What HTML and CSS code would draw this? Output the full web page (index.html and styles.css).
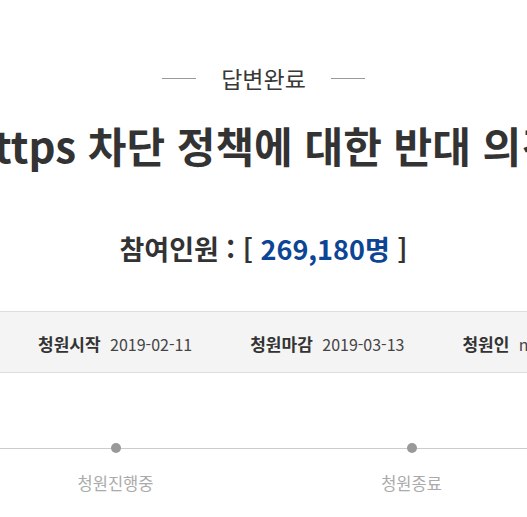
FILE: index.html
```html
<!DOCTYPE html>
<html lang="ko">
<head>
  <meta charset="UTF-8" />
  <meta name="viewport" content="width=device-width, initial-scale=1" />
  <title>https 차단 정책에 대한 반대 의견</title>
  <link rel="stylesheet" href="styles.css">
</head>
<body>

  <div id="petition">
    <div class="status">
      <span class="status-line"></span>
      <span class="status-text">답변완료</span>
      <span class="status-line"></span>
    </div>

    <div class="title-wrap">
      <h1 class="title">https 차단 정책에 대한 반대 의견</h1>
    </div>

    <h2 class="count">참여인원 : [ <span class="count-num">269,180명</span> ]</h2>

    <ul class="meta">
      <li><strong>청원시작</strong> 2019-02-11</li>
      <li><strong>청원마감</strong> 2019-03-13</li>
      <li><strong>청원인</strong> naver - ***</li>
    </ul>

    <ol class="steps">
      <li class="step">
        <div class="track"><span class="dot"></span></div>
        <p class="step-name">청원시작</p>
      </li>
      <li class="step">
        <div class="track"><span class="dot"></span></div>
        <p class="step-name">청원진행중</p>
      </li>
      <li class="step">
        <div class="track"><span class="dot"></span></div>
        <p class="step-name">청원종료</p>
      </li>
      <li class="step">
        <div class="track"><span class="dot"></span></div>
        <p class="step-name">답변완료</p>
      </li>
    </ol>
  </div>

</body>
</html>
```

FILE: styles.css
```css
html, body {
  margin: 0;
  padding: 0;
  background: #fff;
  color: #333;
  font-family: "Noto Sans CJK KR", "Noto Sans", sans-serif;
}

#petition {
  overflow: hidden;
  padding-top: 62px;
}

.status {
  display: flex;
  justify-content: center;
  align-items: center;
  gap: 25px;
  height: 32px;
}

.status-line {
  width: 34px;
  height: 1px;
  background-color: #999;
}

.status-text {
  font-size: 23px;
  line-height: 32px;
  color: #383838;
}

.title-wrap {
  display: flex;
  justify-content: center;
  margin-top: 25px;
}

.title {
  flex: none;
  margin: 0;
  font-size: 42px;
  line-height: 52px;
  font-weight: 700;
  white-space: nowrap;
  color: #333;
}

.count {
  margin: 58px 0 0;
  text-align: center;
  font-size: 27px;
  line-height: 40px;
  font-weight: 700;
  color: #333;
}

.count-num {
  color: #0d4596;
}

.meta {
  display: flex;
  gap: 58px;
  margin: 42px 0 0;
  padding: 20px 0 16px 38px;
  list-style: none;
  background-color: #f4f4f4;
  border-top: 1px solid #ddd;
  border-bottom: 1px solid #ddd;
  white-space: nowrap;
  font-size: 16px;
  line-height: 24px;
  color: #444;
}

.meta strong {
  margin-right: 5px;
  font-size: 17px;
  color: #333;
}

.steps {
  display: flex;
  justify-content: center;
  margin: 70px 0 0;
  padding: 0;
  list-style: none;
}

.step {
  flex: none;
  width: 296px;
  text-align: center;
}

.track {
  display: flex;
  justify-content: center;
  align-items: center;
  height: 10px;
  background: linear-gradient(#ccc, #ccc) center / 100% 1px no-repeat;
}

.dot {
  width: 10px;
  height: 10px;
  border-radius: 50%;
  background-color: #999;
}

.step-name {
  margin: 18px 0 0;
  font-size: 16.5px;
  line-height: 24px;
  color: #aaa;
}
```
